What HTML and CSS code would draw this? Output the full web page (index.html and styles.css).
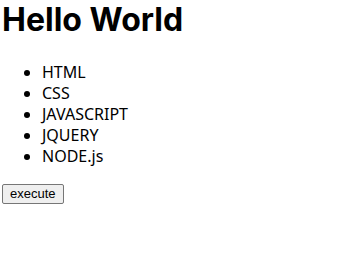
FILE: index.html
```html
<!DOCTYPE html>
<html lang="ko">

<head>
    <meta charset="UTF-8">
    <title>Hello World</title>
    <link rel="stylesheet" href="styles.css">
</head>

<body>
    <h1 class="title">Hello World</h1>
    <ul class="tech-list">
        <li>HTML</li>
        <li>CSS</li>
        <li>JAVASCRIPT</li>
        <li>JQUERY</li>
        <li>NODE.js</li>
    </ul>
    <button class="run-btn">execute</button>
</body>

</html>
```

FILE: styles.css
```css
body {
    font-family: "Noto Sans", sans-serif;
    margin: 0;
    padding: 0 2px;
    color: #000;
    background: #fff;
}

.title {
    font-family: Inter, "Noto Sans", sans-serif;
    font-size: 32px;
    line-height: 39px;
    margin: 0 0 23px 0;
}

.tech-list {
    margin: 0 0 14px 0;
    padding-left: 40px;
    font-size: 16px;
    line-height: 21px;
}

.run-btn {
    font-family: Arial, "Liberation Sans", sans-serif;
    font-size: 13px;
    margin: 0;
    padding: 1px 7px;
    height: 20px;
    background: #efefef;
    border: 1px solid #767676;
    border-radius: 2px;
}
```
